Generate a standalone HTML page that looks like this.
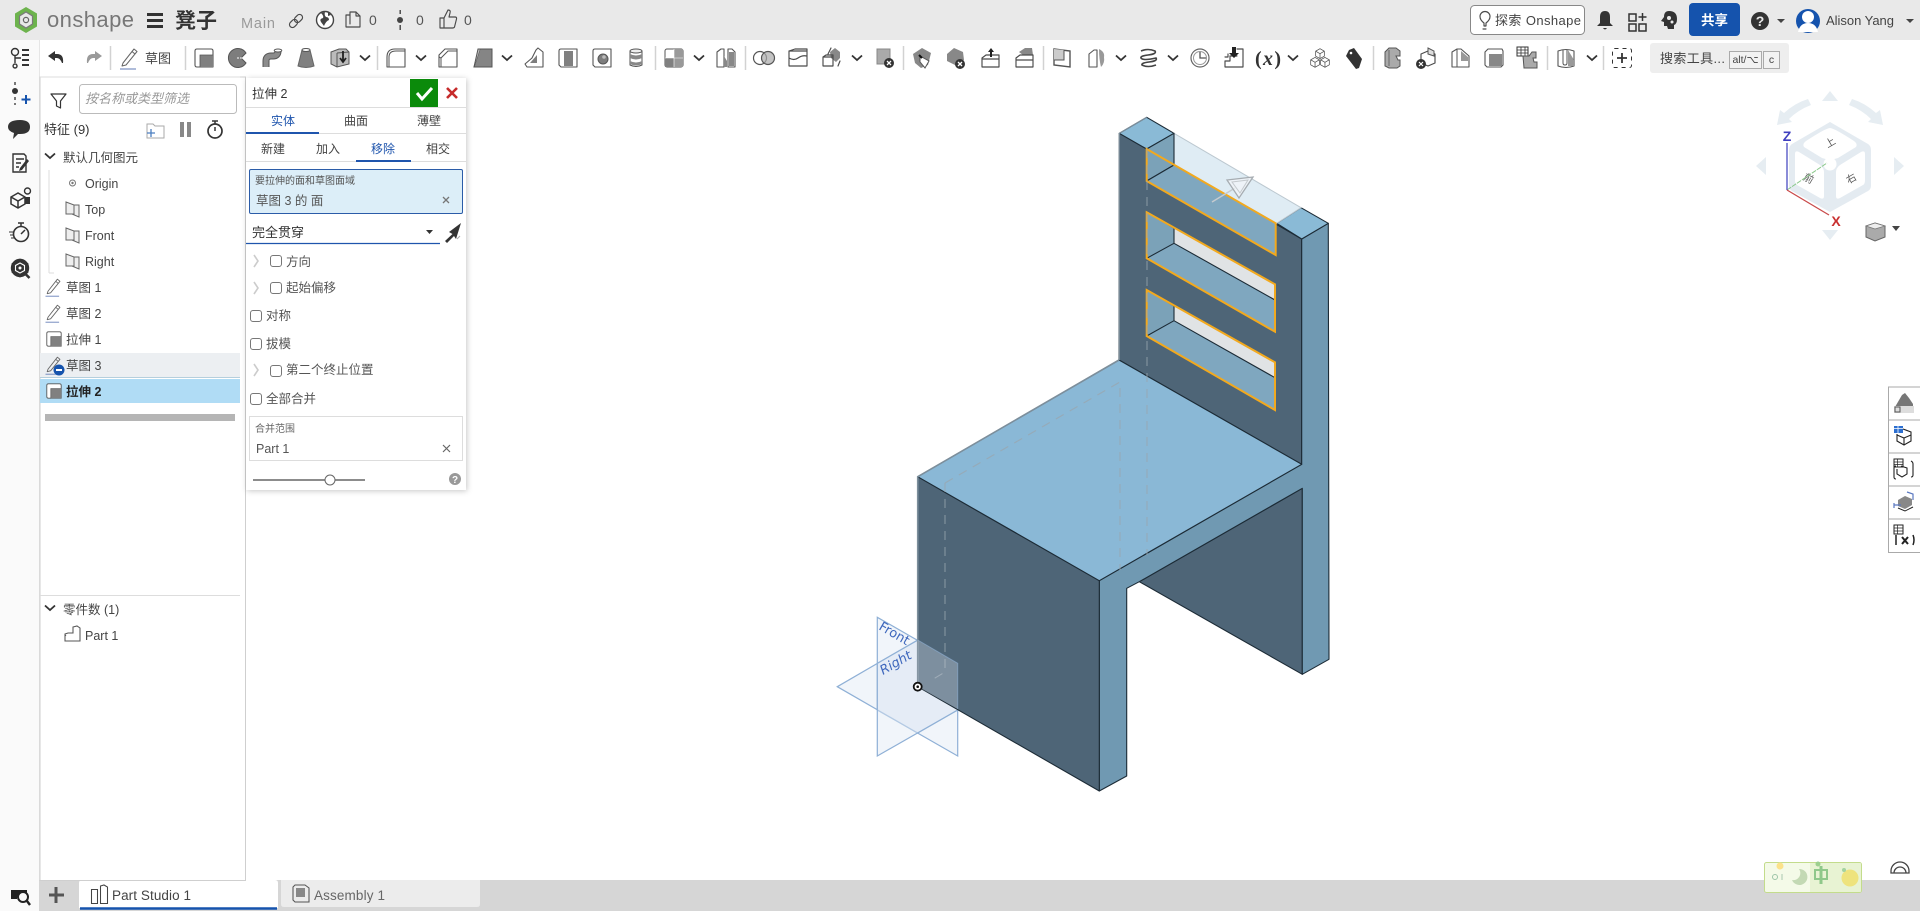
<!DOCTYPE html>
<html lang="zh"><head><meta charset="utf-8"><title>凳子</title>
<style>
html,body{margin:0;padding:0;width:1920px;height:911px;overflow:hidden;background:#fff}
svg{position:absolute;left:0;top:0;display:block}
text{font-family:"Liberation Sans","Noto Sans CJK SC",sans-serif;font-size:12.5px;fill:#444}
.c{text-anchor:middle}
.i{fill:none;stroke:#4a4a4a;stroke-width:1.15;stroke-linejoin:round;stroke-linecap:round}
.w{fill:#fff;stroke:#555;stroke-width:1.1;stroke-linejoin:round}
.ch{fill:none;stroke:#333;stroke-width:1.8}
.sep{stroke:#d2d2d2;stroke-width:1.5}
.hid{fill:none;stroke:#9aa6ae;stroke-width:1.1;stroke-dasharray:9 7;opacity:.75}
.e{stroke:#1c2b36;stroke-width:1.1;stroke-linejoin:round}
.o{fill:none;stroke:#f2a91e;stroke-width:2;stroke-linejoin:miter}
</style></head><body>
<svg width="1920" height="911" viewBox="0 0 1920 911" xmlns="http://www.w3.org/2000/svg">
<defs>
<g id="ch"><path class="ch" d="M-5 -2.500 L0 2 L5 -2.500"/></g>
<g id="ext"><path class="w" d="M-9 -7 q0 -2 2 -2 H7 q2 0 2 2 V9 H-7 q-2 0 -2 -2z"/><rect x="-4" y="-3" width="13" height="12" fill="#808080"/><path d="M-4 9 V-3 H9" fill="none" stroke="#555" stroke-width=".8"/></g>
<g id="sk"><path fill="none" stroke="#666" stroke-width="1.050" stroke-linejoin="round" d="M-7 6 L4 -8 L7 -5.500 L-4 8 L-8 9z M2 -5.500 L5 -3"/><path d="M-10 12 H6" stroke="#6d86bb" stroke-width="1.100"/></g>
<g id="plane"><path fill="#eee" stroke="#666" stroke-width="1" d="M-7 -7 L1 -4 H6 V8 L-1 5 H-7z"/><path fill="none" stroke="#666" stroke-width="1" d="M1 -4 V5 H-7"/></g>
<g id="cube"><path class="i" d="M0 -8 L7 -4 V4 L0 8 L-7 4 V-4z M-7 -4 L0 0 L7 -4 M0 0 V8"/></g>
<filter id="sh" x="-10%" y="-10%" width="120%" height="120%"><feDropShadow dx="1" dy="1" stdDeviation="3" flood-color="#000" flood-opacity=".22"/></filter>
</defs>

<!-- base regions -->
<rect width="1920" height="40" fill="#e9e9e9"/>
<rect x="0" y="40" width="40" height="871" fill="#fafafa"/>
<rect x="39" y="40" width="1" height="840" fill="#e6e6e6"/>

<!-- chair: planes behind -->
<g fill="#dfe8f3" fill-opacity=".45" stroke="#8fb0d6" stroke-width="1.2">
<path d="M837.3 686.7 L917.7 640 L998 686.7 L917.7 733z"/>
<path d="M877.3 617.3 L957.7 663.3 V756 L877.3 710z"/>
<path d="M877.3 756 V663.3 L957.7 617.3 V710z"/>
</g>
<text x="0" y="0" transform="translate(878 629) rotate(30)" style="font-family:'DejaVu Sans',sans-serif;font-size:13px;fill:#3f68bd">Front</text>
<text x="0" y="0" transform="translate(883 675) rotate(-30)" style="font-family:'DejaVu Sans',sans-serif;font-size:13px;font-style:italic;fill:#3f68bd">Right</text>

<!-- chair body -->
<g class="e">
<polygon fill="#4e6577" points="1139.3,581.7 1302.3,488.3 1302.3,674.3"/>
<polygon fill="#4e6577" points="1119.3,133.3 1146.7,149 1301.7,239 1301.7,464.3 1119,360"/>
<polygon fill="#7099b2" points="1099.3,580.7 1301.7,464.3 1301.7,239 1328.3,223.3 1329,659.3 1302.3,674.3 1302.3,488.3 1139.3,581.7 1126.7,588.3 1126.7,776 1099.3,791"/>
<polygon fill="#4e6577" points="917.7,476.7 1099.3,580.7 1099.3,791 917.7,686.7"/>
<polygon fill="#8ab8d6" points="917.7,476.7 1119,360 1301.7,464.3 1099.3,580.7"/>
<polygon fill="#8abad6" points="1119.3,133.3 1146.7,117.3 1174,133.3 1146.7,149"/>
<polygon fill="#8abad6" points="1276.7,223.3 1301,207.7 1328.3,223.3 1301.7,239"/>
</g>
<!-- light silhouettes -->
<path d="M1119 360 L917.7 476.7 V686.7" stroke="#7d8f9c" stroke-width="1.600" fill="none"/>
<path d="M1119.3 360 V133.3 L1146.7 117.3" stroke="#7d8f9c" stroke-width="1.200" fill="none"/>
<!-- top slot -->
<polygon fill="#dfecf4" stroke="#bcc8d0" stroke-width="1" points="1174,133.3 1301,207.7 1276.7,223.3 1174,165"/>
<polygon fill="#7ba2b8" class="e" points="1146.7,149 1174,133.3 1174,165 1146.7,181"/>
<polygon fill="#7fa7bf" class="e" points="1146.7,181 1174,165 1275.7,223.3 1275.7,255"/>
<polygon class="o" points="1146.7,149 1275.7,223.3 1275.7,255 1146.7,181"/>
<!-- slot 2 -->
<polygon fill="#7ba2b8" points="1146.7,212.3 1174,229 1174,243.3 1146.7,258.3"/>
<polygon fill="#e0e3e5" points="1174,227 1275,284.3 1275,300 1174,243.3"/>
<polygon fill="#7fa7bf" points="1146.7,258.3 1174,243.3 1275,300 1275,331.7"/>
<path class="e" fill="none" d="M1146.7 258.3 L1174 243.3 L1275 300 M1174 227 V243.3"/>
<polygon class="o" points="1146.7,212.3 1275,284.3 1275,331.7 1146.7,258.3"/>
<!-- slot 3 -->
<polygon fill="#7ba2b8" points="1146.7,290 1174,306.7 1174,320.7 1146.7,336"/>
<polygon fill="#e0e3e5" points="1174,305 1275,362.3 1275,377.7 1174,320.7"/>
<polygon fill="#7fa7bf" points="1146.7,336 1174,320.7 1275,377.7 1275,410"/>
<path class="e" fill="none" d="M1146.7 336 L1174 320.7 L1275 377.7 M1174 305 V320.7"/>
<polygon class="o" points="1146.7,290 1275,362.3 1275,410 1146.7,336"/>
<!-- arrow -->
<path d="M1212 202 L1235 188" stroke="#c6cbcf" stroke-width="1.400" fill="none"/>
<path d="M1227 180 L1253 177 L1239 198z" fill="#f4f7f9" fill-opacity=".7" stroke="#a6acb1" stroke-width="1.300"/>
<path d="M1232 182 L1248 180 L1240 193z" fill="none" stroke="#c4c9cd" stroke-width="1"/>
<!-- hidden -->
<path class="hid" d="M945 483 V672 L930 681"/>
<path class="hid" d="M945 483 L1120 382 V570"/>
<path class="hid" d="M1147 149 V555"/>
<!-- plane overlay on chair corner -->
<polygon points="917.7,640 957.7,663.3 957.7,709 917.7,686.7" fill="#c5cfdb" fill-opacity=".4"/>
<path d="M917.7 640 L957.7 663.3 V709" fill="none" stroke="#8fb0d6" stroke-width="1" opacity=".6"/>
<circle cx="917.7" cy="686.7" r="4" fill="#fff" stroke="#111" stroke-width="1.800"/><circle cx="917.7" cy="686.7" r="1.300" fill="#111"/>

<!-- gizmo -->
<g fill="#e6edf2">
<path d="M1830 91 L1838 101 H1822z M1756 166 L1766 157 V175z M1904 166 L1894 157 V175z M1830 240 L1822 230 H1838z"/>
<path d="M1777 125 L1780 110 L1784 113 Q1795 103 1808 99 L1811 105 Q1798 110 1789 119 L1792 122z"/>
<path d="M1883 125 L1880 110 L1876 113 Q1865 103 1852 99 L1849 105 Q1862 110 1871 119 L1868 122z"/>
<path d="M1830 122 L1868 144 Q1871 146 1871 150 V186 Q1871 189 1868 191 L1830 212 L1792 191 Q1789 189 1789 186 V150 Q1789 146 1792 144z" fill="#e4ebf1"/>
</g>
<path d="M1830 128 Q1834 128 1854 141 Q1858 144 1856 147 L1838 158 Q1830 161 1822 158 L1804 147 Q1802 144 1806 141 Q1826 128 1830 128z" fill="#fff"/>
<path d="M1795 154 Q1795 150 1799 152 L1820 165 Q1824 168 1824 172 V196 Q1824 200 1820 198 L1797 185 Q1795 184 1795 180z" fill="#fff"/>
<path d="M1865 154 Q1865 150 1861 152 L1840 165 Q1836 168 1836 172 V196 Q1836 200 1840 198 L1863 185 Q1865 184 1865 180z" fill="#fff"/>
<circle cx="1830" cy="164" r="6.500" fill="#fff"/>
<text class="c" x="1830" y="146" transform="rotate(-30 1830 142)" style="font-size:10px;fill:#555">上</text>
<text class="c" x="1809" y="182" transform="rotate(30 1809 178)" style="font-size:10px;fill:#555">前</text>
<text class="c" x="1851" y="182" transform="rotate(-30 1851 178)" style="font-size:10px;fill:#555">右</text>
<path d="M1787 190 L1827 163" stroke="#8bc98b" stroke-width="1" fill="none" stroke-dasharray="5 1"/>
<path d="M1787 143 V190" stroke="#4a4fc4" stroke-width="1.300" fill="none"/>
<path d="M1787 190 L1829 215" stroke="#c94a4a" stroke-width="1.300" fill="none"/>
<text class="c" x="1787" y="141" style="font-size:14px;font-weight:bold;fill:#3f3fbf">Z</text>
<text class="c" x="1836" y="226" style="font-size:14px;font-weight:bold;fill:#c93030">X</text>
<path d="M1875 223 L1885 226 V237 L1875 241 L1866 237 V226z" fill="#aaa" stroke="#666"/>
<path d="M1866 226 L1875 229 L1885 226 L1875 223z" fill="#eee" stroke="#777" stroke-width=".7"/>
<path d="M1892 226 H1900 L1896 231z" fill="#444"/>

<!-- TOP BAR -->
<path d="M26 7 L37 13.500 V26.500 L26 33 L15 26.500 V13.500z" fill="#6db34d"/>
<path d="M26 12 L32.500 16 V24 L26 28 L19.500 24 V16z" fill="#e9e9e9" stroke="#7b7b7b" stroke-width="1.200"/>
<circle cx="26" cy="20" r="2.600" fill="none" stroke="#666" stroke-width="1.200"/>
<text x="47" y="27" style="font-size:22px;fill:#777" textLength="87">onshape</text>
<path d="M147 14.500 H163 M147 20.500 H163 M147 26.500 H163" stroke="#333" stroke-width="3"/>
<text x="175" y="28" style="font-size:21px;font-weight:bold;fill:#333">凳子</text>
<text x="241" y="28" style="font-size:14.500px;fill:#9a9a9a" textLength="34">Main</text>
<g class="i" transform="translate(296,21) rotate(-45)"><rect x="-8" y="-3" width="9" height="6" rx="3"/><rect x="-1" y="-3" width="9" height="6" rx="3"/></g>
<circle cx="325" cy="20" r="8.500" fill="#fff" stroke="#444" stroke-width="1.400"/><path d="M321 13 q3 3 2 5 q-4 1 -2 4 l3 4 q2 -5 5 -6 q0 -3 -3 -3 q-2 -2 -1 -5z M328 12 l3 3 l-3 1z" fill="#444"/>
<path class="i" d="M346 15 h4 v-3 h6 l4 4 v11 h-14z M350 15 v9 M356 12 v4 h4"/><text x="369" y="25" style="font-size:14px;fill:#555">0</text>
<g fill="#444"><circle cx="400" cy="20" r="3"/><path d="M399.500 10 h1.400 v4 h-1.400z M399.500 25 h1.400 v5 h-1.400z"/></g><text x="416" y="25" style="font-size:14px;fill:#555">0</text>
<path class="i" d="M440 18 h4 v10 h-4z M444 18 l4 -8 q3 0 2 3 l-1 4 h6 q2 0 1.500 2 l-2 8 q-.5 1 -2 1 h-9.500"/><text x="464" y="25" style="font-size:14px;fill:#555">0</text>

<rect x="1470.500" y="5.500" width="114" height="29" rx="4" fill="#fff" stroke="#888"/>
<path class="i" d="M1484 26 v-3 q-4 -3 -4 -6.500 a5 5 0 0 1 10 0 q0 3.500 -4 6.500 v3 z M1483 29 h3"/>
<text x="1495" y="25" style="font-size:13px" textLength="86">探索 Onshape</text>
<path d="M1605 11 q5 0 5 6 v6 l3 3 h-16 l3 -3 v-6 q0 -6 5 -6z M1603 28 h4 q-2 3 -4 0z" fill="#333"/>
<path fill="none" stroke-width="1.500" stroke="#333" d="M1629 14 h7 v7 h-7z M1629 24 h7 v7 h-7z M1639 24 h7 v7 h-7z M1642.500 13 v8 M1638.500 17 h8"/>
<path d="M1669 11 q8 0 8 8 q0 5 -3 6 v4 h-6 l-1 -3 h-3 v-4 l-3 -1 l3 -4 q0 -6 5 -6z" fill="#333"/><circle cx="1669" cy="18" r="2" fill="#e9e9e9"/><circle cx="1672" cy="22" r="1.500" fill="#e9e9e9"/>
<rect x="1689" y="3" width="51" height="33" rx="4" fill="#1553ad"/>
<text class="c" x="1714.500" y="25" style="font-size:13.500px;font-weight:bold;fill:#fff">共享</text>
<circle cx="1760" cy="21" r="9" fill="#333"/><text class="c" x="1760" y="26" style="font-size:14px;font-weight:bold;fill:#e9e9e9">?</text>
<path d="M1777 19 h8 l-4 4z" fill="#444"/>
<circle cx="1808" cy="21" r="12" fill="#1553ad"/><circle cx="1808" cy="17" r="6" fill="#fff"/><path d="M1798 32 q2 -9 10 -9 q8 0 10 9 z" fill="#fff"/>
<text x="1826" y="25" style="font-size:13px" textLength="68">Alison Yang</text>
<path d="M1906 19 h8 l-4 4z" fill="#444"/>

<!-- TOOLBAR -->
<path d="M63 63 q1 -9 -6 -9 h-2 v-3 l-7 5 l7 5 v-3 h2 q3 0 5 5z" fill="#333"/>
<path d="M87 63 q-1 -9 6 -9 h2 v-3 l7 5 l-7 5 v-3 h-2 q-3 0 -5 5z" fill="#9a9a9a"/>
<g class="sep"><path d="M110.500 46 V70 M185.500 46 V70 M377.500 46 V70 M655.500 46 V70 M745.500 46 V70 M903.500 46 V70 M1043.500 46 V70 M1373.500 46 V70 M1547.500 46 V70 M1603.500 46 V70"/></g>
<use href="#sk" x="130" y="57"/>
<text x="145" y="63" style="font-size:13px" textLength="26">草图</text>
<use href="#ext" x="204" y="58"/>
<g transform="translate(238,58)"><path d="M8 -5 A9.500 9.500 0 1 0 8 5 L3 0z" fill="#7d7d7d" stroke="#555"/><path d="M-1 0 h10" stroke="#fff" stroke-width="1" stroke-dasharray="2 1"/></g>
<g transform="translate(273,58)"><path d="M-7 9 V3 q0 -5 5 -5 h2 q5 0 5 -5" fill="none" stroke="#555" stroke-width="7"/><path d="M-7 9 V3 q0 -5 5 -5 h2 q5 0 5 -5" fill="none" stroke="#8c8c8c" stroke-width="5"/><ellipse cx="5" cy="-7.500" rx="3.800" ry="1.500" fill="#fff" stroke="#555"/></g>
<g transform="translate(306,58)"><path d="M-4 -8 L-8 8 q8 3 16 0 L4 -8z" fill="#808080" stroke="#666"/><ellipse cx="0" cy="-8" rx="4" ry="1.500" fill="#fff" stroke="#555"/></g>
<g transform="translate(340,58)"><path d="M-9 -6 L-1 -9 L6 -9 L9 -6 V6 L-3 9 L-9 6z" fill="#bbb" stroke="#555"/><path d="M-3 -5 L9 -6 M-3 -5 V9" stroke="#555" fill="none"/><path d="M3 -7 V3 M0 0 L3 4 L6 0" stroke="#222" stroke-width="1.800" fill="none"/></g>
<use href="#ch" x="365" y="58"/>
<g transform="translate(396,58)"><path class="w" d="M-9 9 V-1 q0 -8 8 -8 H9 V9z"/><path fill="none" stroke="#555" d="M-7 9 V-1 q0 -6 7 -6 H9"/></g><use href="#ch" x="421" y="58"/>
<g transform="translate(448,58)"><path class="w" d="M-9 -3 L-3 -9 H9 V9 H-9z"/><path fill="none" stroke="#555" d="M-9 -1 L-7 -0 V9 M-7 0 L0 -7 H9"/></g>
<g transform="translate(483,58)"><path d="M-3 -9 H9 V9 H-9z" fill="#858585" stroke="#555"/><path d="M-3 -9 L-5 -9 L-9 9" fill="#bbb" stroke="#555"/></g><use href="#ch" x="507" y="58"/>
<g transform="translate(534,58)"><path class="w" d="M-9 6 L-2 0 L2 -8 L4 -10 L9 -6 V9 H-7z"/><path d="M-4 5 L3 -3 V5z" fill="#7d7d7d"/></g>
<g transform="translate(568,58)"><path class="w" d="M-9 -7 q0 -2 2 -2 H9 V9 H-7 l-2 -2z"/><rect x="-4" y="-7" width="9" height="15" fill="#808080"/></g>
<g transform="translate(602,58)"><path class="w" d="M-9 -7 q0 -2 2 -2 H9 V9 H-7 l-2 -2z"/><circle cx="1" cy="1" r="5" fill="#7d7d7d" stroke="#555"/><circle cx="2" cy="-1" r="1.800" fill="#bbb"/></g>
<g transform="translate(636,58)"><path d="M-6 -7 V7 q6 3 12 0 V-7z" fill="#fff" stroke="#555"/><path d="M-6 -4 q6 3 12 0 V0 q-6 3 -12 0z M-6 3 q6 3 12 0 v3 q-6 3 -12 0z" fill="#888"/><ellipse cx="0" cy="-7" rx="6" ry="2" fill="#eee" stroke="#555"/></g>
<g transform="translate(674,58)"><rect x="-9" y="-9" width="18" height="18" rx="2" fill="#fff" stroke="#555"/><rect x="0" y="-9" width="9" height="9" fill="#999"/><rect x="-9" y="0" width="9" height="9" fill="#808080"/><rect x="0" y="0" width="9" height="9" fill="#999"/><path d="M-9 0 H9 M0 -9 V9" stroke="#fff" stroke-width=".6"/></g><use href="#ch" x="699" y="58"/>
<g transform="translate(726,58)"><path class="w" d="M-9 -6 L-5 -9 h3 V9 h-7z"/><path class="w" d="M2 -9 h4 l3 3 V9 H2z"/><path d="M-2 -2 l3 5 v6 h-3z" fill="#888"/><path d="M3 -6 h5 V8 H3z" fill="#888"/></g>
<circle cx="760" cy="58" r="6.500" fill="#fff" stroke="#555" stroke-width="1.200"/><circle cx="768" cy="58" r="6.500" fill="#aaa" fill-opacity=".7" stroke="#555" stroke-width="1.200"/>
<g transform="translate(798,58)"><path class="i" d="M-9 -7 L-3 -9 H9 V8 H-9z M-9 -7 H9 M-9 0 q5 3 9 0 q4 -3 9 -2"/></g>
<g transform="translate(832,58)"><path d="M3 -10 l5 4 v6 l-4 4 l-5 -4 l-1 -6z" fill="#888"/><path class="i" d="M-9 -1 l3 -2 h7 v11 h-10z M-9 -1 h10 M-4 -4 l3 -6 M8 3 l-2 5"/></g><use href="#ch" x="857" y="58"/>
<g transform="translate(884,58)"><rect x="-7" y="-9" width="13" height="15" fill="#aaa" stroke="#888"/><circle cx="5" cy="5" r="5" fill="#333"/><path d="M3 3 l4 4 m0 -4 l-4 4" stroke="#fff" stroke-width="1.300"/></g>
<g transform="translate(922,58)"><path d="M-9 -4 l9 -6 l9 5 l-3 12 l-7 3 l-6 -5z" fill="#888"/><path d="M-2 -2 l9 5 l-4 7 l-5 -6z" fill="#fff" stroke="#555"/><path d="M-3 -3 l3 3" stroke="#111" stroke-width="2"/></g>
<g transform="translate(956,58)"><path d="M-9 -4 l7 -6 l9 4 l1 8 l-9 5 l-8 -4z" fill="#888"/><circle cx="4" cy="6" r="5" fill="#333"/><path d="M2 4 l4 4 m0 -4 l-4 4" stroke="#fff" stroke-width="1.300"/></g>
<g transform="translate(990,58)"><path class="i" d="M-8 0 l4 -3 h13 v12 h-17z M-8 1 h17"/><path d="M1 -10 l-3 4 h2 v5 h2 v-5 h2z" fill="#222"/></g>
<g transform="translate(1024,58)"><path d="M-5 -6 l6 -4 h7 l1 7 h-10z" fill="#888"/><path class="i" d="M-8 0 l4 -3 h13 v12 h-17z M-8 2 h17"/></g>
<g transform="translate(1062,58)"><path d="M-8 -9 L8 -7 V9 L-8 7z" fill="#fff" stroke="#555" stroke-width="1.400"/><path d="M-8 -9 L2 -8 V2 H-8z" fill="#ccc"/><path d="M2 -8 V2 H-8" fill="none" stroke="#555"/></g>
<g transform="translate(1097,58)"><path class="w" d="M-8 -4 l5 -4 h3 V9 h-8z"/><path d="M2 -9 q6 3 5 8 q1 6 -3 10 q-2 -8 -2 -18z" fill="#999"/></g><use href="#ch" x="1121" y="58"/>
<path fill="none" stroke="#444" stroke-width="1.600" d="M1141 51 q7 -3 14 0 q2 3 -7 4 q-8 1 -7 3 q2 3 15 0 q2 3 -7 4 q-8 1 -7 3 q6 3 14 0"/><use href="#ch" x="1173" y="58"/>
<circle cx="1200" cy="58" r="9" fill="#fff" stroke="#666" stroke-width="1.200"/><circle cx="1200" cy="58" r="6.500" fill="none" stroke="#999"/><path d="M1200 52 V58 H1206" stroke="#555" fill="none" stroke-width="1.300"/>
<g transform="translate(1234,58)"><path class="i" d="M-9 -1 h3 v-3 M3 -9 h6 v18 h-18 v-6 h5 v-5 h7"/><path d="M-2 -11 v6 h-3 l5 5 l5 -5 h-3 v-6z" fill="#222"/></g>
<text x="1255" y="65" style="font-family:'Liberation Serif',serif;font-size:20px;font-weight:bold;fill:#333" textLength="26">(<tspan font-style="italic">x</tspan>)</text>
<use href="#ch" x="1293" y="58"/>
<g transform="translate(1320,58) scale(.62)"><use href="#cube" y="-7"/><use href="#cube" x="-8" y="7"/><use href="#cube" x="8" y="7"/></g>
<path d="M1349 50 l5 -2 l8 11 l-3 9 l-3 1 l-10 -13z" fill="#333"/><circle cx="1351" cy="53" r="1.300" fill="#fff"/>
<g transform="translate(1392,58)"><path d="M-7 -6 l4 -4 h7 l4 3 v5 h-4 l2 4 h2 v6 l-3 2 h-8 l-4 -2z" fill="#aaa" stroke="#555"/><path d="M-3 -8 V8" stroke="#666" fill="none"/></g>
<g transform="translate(1426,58)"><path class="i" d="M-5 -4 l7 -3 l7 3 v9 l-7 3 l-7 -3z"/><path d="M2 -10 l6 3 v5 l-6 -2z" fill="#ddd" stroke="#555"/><circle cx="-5" cy="6" r="5" fill="#333"/><path d="M-7 4 l4 4 m0 -4 l-4 4" stroke="#fff" stroke-width="1.200"/></g>
<g transform="translate(1460,58)"><path class="w" d="M-8 -6 l5 -3 h4 l8 7 v11 h-17z"/><path d="M1 -7 l7 6 v4 h-7z" fill="#999"/><path d="M-3 -9 V9" stroke="#555"/></g>
<g transform="translate(1494,58)"><path class="w" d="M-9 -6 l3 -3 h14 l1 2 v14 l-2 2 h-14 l-2 -2z"/><path d="M-5 -4 h13 v12 h-13z" fill="#888"/></g>
<g transform="translate(1528,58)"><rect x="-11" y="-11" width="11" height="9" fill="#fff" stroke="#333"/><path d="M-11 -8 h11 M-11 -5 h11 M-7 -11 v9 M-3 -11 v9" stroke="#333" stroke-width=".8"/><path d="M-5 -2 h6 l3 -4 h4 v6 h-3 l1 4 h3 v6 h-13z" fill="#aaa" stroke="#555"/></g>
<g transform="translate(1566,58)"><path class="w" d="M-8 -7 q8 -3 16 0 v15 q-8 3 -16 0z"/><path d="M-3 -8 v13 q0 2 2 2 q2 0 2 -2 v-13" fill="none" stroke="#555"/><path d="M2 -8 l6 10 v6 h-6z" fill="#999"/></g><use href="#ch" x="1592" y="58"/>
<rect x="1612.500" y="48.500" width="19" height="19" rx="2" fill="none" stroke="#333" stroke-dasharray="4 4"/><path d="M1622 53 v10 M1617 58 h10" stroke="#333" stroke-width="1.800"/>
<rect x="1650" y="43" width="139" height="30" rx="3" fill="#eeeeee"/>
<text x="1660" y="63" style="font-size:13px" textLength="65">搜索工具...</text>
<rect x="1729.500" y="51.500" width="32" height="17" fill="#f2f2f2" stroke="#aaa"/><text class="c" x="1745.500" y="63" style="font-size:10.500px">alt/⌥</text>
<rect x="1763.500" y="51.500" width="16" height="17" fill="#f2f2f2" stroke="#aaa"/><text class="c" x="1771.500" y="63" style="font-size:10.500px">c</text>

<!-- LEFT RAIL -->
<g transform="translate(20,58)"><circle cx="-5" cy="-6" r="3.500" fill="none" stroke="#333" stroke-width="1.400"/><path d="M-5 -2 V5 M-5 0 H1 M-5 6 m0 0 a2 2 0 1 0 .1 0" fill="none" stroke="#333" stroke-width="1.400"/><path d="M2 -8 H9 M2 -3 H9 M2 2 H9 M2 7 H9" stroke="#333" stroke-width="2"/></g>
<g transform="translate(20,94)"><path d="M-5 -12 v3 M-5 3 v3 M-5 9 v2" stroke="#333" stroke-width="1.300"/><circle cx="-5" cy="-3" r="3" fill="#333"/><path d="M6 1 v9 M1.500 5.500 h9" stroke="#1553ad" stroke-width="2"/></g>
<path d="M20 120 q10 0 10 7 q0 7 -10 7 h-2 l-5 5 l1 -6 q-6 -2 -6 -6 q0 -7 12 -7z" fill="#333"/>
<g transform="translate(20,163)"><path fill="none" stroke="#333" stroke-width="1.400" d="M-7 -9 h11 l2 2 v16 h-13z M-4 -4 h8 M-4 0 h5 M-4 4 h3"/><path d="M0 5 l7 -9 l2 2 l-7 9 l-3 1z" fill="#333"/></g>
<g transform="translate(20,198)"><path fill="none" stroke="#333" stroke-width="1.500" d="M-2 -5 l-7 4 v7 l7 4 l7 -4 v-7z M-9 -1 l7 4 l7 -4 M-2 3 v7"/><rect x="5" y="-1" width="5" height="7" fill="#333"/><circle cx="7.500" cy="-7" r="3" fill="none" stroke="#333" stroke-width="1.400"/></g>
<g transform="translate(20,233)"><circle cx="1" cy="1" r="7.500" fill="none" stroke="#333" stroke-width="1.600"/><path d="M-2 -10 h6 M1 -10 v3 M1 1 l4 -4" stroke="#333" stroke-width="1.500"/><path d="M-11 -1 h5 M-10 2 h4 M-9 5 h4" stroke="#333" stroke-width="1.100"/></g>
<g transform="translate(20,268)"><path d="M0 -9.500 L8.500 -4.500 V4.500 L0 9.500 L-8.500 4.500 V-4.500z" fill="#333"/><circle cx="0" cy="0" r="8" fill="none" stroke="#333" stroke-width="2.400"/><path d="M5.500 6 l4 4" stroke="#333" stroke-width="2.600"/><path d="M0 -5 l4.500 2.500 v5 L0 5 l-4.500 -2.500 v-5z" fill="none" stroke="#fff" stroke-width="1.100"/><circle cx="0" cy="0" r="1.500" fill="#fff"/></g>
<g transform="translate(20,897)"><path d="M-9 -7 h16 v3 h-7 a6 6 0 0 0 -3 6 h-6z" fill="#222"/><circle cx="3" cy="0" r="5" fill="none" stroke="#222" stroke-width="2"/><path d="M7 4 l3 4" stroke="#222" stroke-width="2.400"/></g>

<!-- BOTTOM BAR -->
<rect x="39" y="880" width="1881" height="31" fill="#d6d6d6"/>
<path d="M56 887 V903 M49 895 H64" stroke="#555" stroke-width="3"/>
<path d="M79 908 V883 q0 -3 3 -3 H275 q3 0 3 3 V908z" fill="#fff"/>
<path d="M80 908.500 H277" stroke="#1553ad" stroke-width="2.400"/>
<path fill="none" stroke="#444" stroke-width="1.050" d="M91.500 889.500 h6 v14 h-6z M100.500 886 l3.500 -1 l3.500 2 v16.500 h-7z"/>
<text x="112" y="900" style="font-size:13.500px" textLength="79">Part Studio 1</text>
<path d="M281 880 H480 V904 q0 3 -3 3 H284 q-3 0 -3 -3z" fill="#ececec"/>
<g transform="translate(301,894)"><path fill="none" stroke="#555" stroke-width="1.050" d="M-8 -7 l2 -2 h10 l4 3 v14 h-14 l-2 -2z"/><rect x="-5" y="-6" width="9" height="9" fill="#888"/></g>
<text x="314" y="900" style="font-size:13.500px;fill:#666" textLength="71">Assembly 1</text>

<!-- FEATURE PANEL -->
<path d="M40 77 H245.500 V880.500 H40z" fill="#fff" stroke="#cfcfcf"/>
<rect x="40" y="76.500" width="200" height="1" fill="#ddd"/>
<path fill="none" stroke="#333" stroke-width="1.200" stroke-linejoin="round" d="M51 94 H66 L60.500 101 V108 L56.500 106 V101z"/>
<rect x="79.500" y="84.500" width="157" height="29" rx="3" fill="#fff" stroke="#bbb"/>
<text x="85" y="103" style="font-size:13px;font-style:italic;fill:#999">按名称或类型筛选</text>
<text x="44" y="134" style="font-size:13px;fill:#333">特征 (9)</text>
<path d="M147 124 h6 l2 2 h9 v12 h-17z" fill="none" stroke="#aaa"/><path d="M151 129 v8 M147 133 h8" stroke="#4a7ec0" stroke-width="1.300"/>
<path d="M180 122 h4 v15 h-4z M187 122 h4 v15 h-4z" fill="#888"/>
<circle cx="215" cy="131" r="7" fill="none" stroke="#333" stroke-width="1.700"/><path d="M212 121 h6 M215 121 v3 M215 127 v4" stroke="#333" stroke-width="1.500"/>
<use href="#ch" x="50" y="156"/>
<text x="63" y="162" style="font-size:12.500px">默认几何图元</text>
<path d="M49 170 V273" stroke="#ddd"/><path d="M49 273 H54" stroke="#ddd"/>
<circle cx="72.500" cy="183" r="3" fill="none" stroke="#777"/><circle cx="72.500" cy="183" r="1.200" fill="#777"/>
<text x="85" y="188">Origin</text>
<use href="#plane" x="73" y="209"/><text x="85" y="214">Top</text>
<use href="#plane" x="73" y="235"/><text x="85" y="240">Front</text>
<use href="#plane" x="73" y="261"/><text x="85" y="266">Right</text>
<use href="#sk" transform="translate(54,286) scale(.85)"/><text x="66" y="292">草图 1</text>
<use href="#sk" transform="translate(54,312) scale(.85)"/><text x="66" y="318">草图 2</text>
<use href="#ext" transform="translate(54,339) scale(.8)"/><text x="66" y="344">拉伸 1</text>
<rect x="40" y="353" width="200" height="24" fill="#eceff2"/><path d="M40 377.500 H240" stroke="#b5cfdd"/>
<use href="#sk" transform="translate(54,364) scale(.85)"/><circle cx="59" cy="370" r="5.500" fill="#1553ad"/><path d="M56 370 h6" stroke="#fff" stroke-width="2"/>
<text x="66" y="370">草图 3</text>
<rect x="40" y="379" width="200" height="24" fill="#b0dcf5"/>
<use href="#ext" transform="translate(54,391) scale(.8)"/><text x="66" y="396" style="font-weight:bold;fill:#222">拉伸 2</text>
<rect x="45" y="414" width="190" height="7" fill="#b5b5b5"/>
<path d="M40 595.500 H240" stroke="#ddd"/>
<use href="#ch" x="50" y="608"/>
<text x="63" y="614">零件数 (1)</text>
<path fill="none" stroke="#555" stroke-width="1.050" d="M65 641 v-7 l3 -1 h5 v-6 l4 -1 l3 2 v13z M65 636 l1 -1"/>
<text x="85" y="640">Part 1</text>

<!-- DIALOG -->
<rect x="246" y="78" width="220" height="412" fill="#fff" filter="url(#sh)"/>
<rect x="246" y="78" width="220" height="412" fill="#fff"/>
<text x="252" y="98" style="font-size:12.500px;fill:#333">拉伸 2</text>
<rect x="410" y="79" width="28" height="28" fill="#0b8a0b"/>
<path d="M417 93 l5 6 l10 -11" fill="none" stroke="#fff" stroke-width="3"/>
<path d="M447 88 l10 10 M457 88 l-10 10" stroke="#c62b2b" stroke-width="2.600"/>
<path d="M246 107.500 H466 M246 133.500 H466 M246 161.500 H466" stroke="#ddd"/>
<text class="c" x="283" y="125" style="font-size:12px;fill:#1f55ad">实体</text>
<text class="c" x="356" y="125" style="font-size:12px">曲面</text>
<text class="c" x="429" y="125" style="font-size:12px">薄壁</text>
<rect x="246" y="132" width="73" height="2" fill="#1f55ad"/>
<text class="c" x="273" y="153" style="font-size:12px">新建</text>
<text class="c" x="328" y="153" style="font-size:12px">加入</text>
<text class="c" x="383" y="153" style="font-size:12px;fill:#1f55ad">移除</text>
<text class="c" x="438" y="153" style="font-size:12px">相交</text>
<rect x="356" y="160" width="55" height="2" fill="#1f55ad"/>
<rect x="249.500" y="169.500" width="213" height="44" rx="1.500" fill="#dceef8" stroke="#2b5ca8"/>
<text x="255" y="184" style="font-size:10px;fill:#555">要拉伸的面和草图面域</text>
<text x="256" y="205" style="font-size:12.500px;fill:#555">草图 3 的 面</text>
<path d="M443 197 l6 6 m0 -6 l-6 6" stroke="#777" stroke-width="1.300"/>
<text x="252" y="237" style="font-size:13px;fill:#333">完全贯穿</text>
<path d="M426 230 h7 l-3.500 4z" fill="#333"/>
<path d="M246 243.500 H440" stroke="#1f55ad" stroke-width="1.300"/>
<path d="M461 223 L449 232 L452.500 234 L445 241 L447 243 L454 236 L456 239z" fill="#333"/><path d="M457 239 l3 -3" stroke="#aaa"/>
<path d="M254 255 l4 6 l-4 6 M254 282 l4 6 l-4 6 M254 364 l4 6 l-4 6" fill="none" stroke="#ccc" stroke-width="1.600"/>
<g fill="#fff" stroke="#777"><rect x="270.500" y="255.500" width="11" height="11" rx="2.500"/><rect x="270.500" y="282.500" width="11" height="11" rx="2.500"/><rect x="250.500" y="310.500" width="11" height="11" rx="2.500"/><rect x="250.500" y="338.500" width="11" height="11" rx="2.500"/><rect x="270.500" y="365.500" width="11" height="11" rx="2.500"/><rect x="250.500" y="393.500" width="11" height="11" rx="2.500"/></g>
<text x="286" y="266" style="fill:#555">方向</text>
<text x="286" y="292" style="fill:#555">起始偏移</text>
<text x="266" y="320" style="fill:#555">对称</text>
<text x="266" y="348" style="fill:#555">拔模</text>
<text x="286" y="374" style="fill:#555">第二个终止位置</text>
<text x="266" y="403" style="fill:#555">全部合并</text>
<rect x="249.500" y="416.500" width="213" height="44" fill="#fff" stroke="#ddd"/>
<text x="255" y="432" style="font-size:10px;fill:#666">合并范围</text>
<text x="256" y="453" style="font-size:12.500px;fill:#555">Part 1</text>
<path d="M443 445 l7 7 m0 -7 l-7 7" stroke="#666" stroke-width="1.200"/>
<path d="M253 480 H365" stroke="#666" stroke-width="1.400"/>
<circle cx="330" cy="480" r="5" fill="#fff" stroke="#666"/>
<circle cx="455" cy="479" r="6" fill="#999"/><text class="c" x="455" y="483" style="font-size:10px;font-weight:bold;fill:#fff">?</text>

<!-- RIGHT STACK -->
<path d="M1920 387 H1888.500 V552.500 H1920" fill="#fff" stroke="#aaa"/>
<path d="M1888 420 H1920 M1888 453 H1920 M1888 486 H1920 M1888 519 H1920" stroke="#aaa"/>
<g transform="translate(1904,403)"><path d="M-9 4 l7 -12 l3 -2 l4 5 l4 6 v3z" fill="#777"/><rect x="-10" y="3" width="20" height="7" fill="#ddd"/><rect x="-9" y="4" width="5" height="5" fill="none" stroke="#555"/></g>
<g transform="translate(1904,436)"><rect x="-10" y="-10" width="9" height="7" fill="#2c6fd0"/><path d="M-10 -7.500 h9 M-6 -10 v7" stroke="#fff" stroke-width=".8"/><path fill="none" stroke="#222" stroke-width="1.100" d="M-1 -7 l8 3 v9 l-7 4 l-7 -4 v-7 M-7 -1 l7 3 l7 -3 M0 2 v7"/></g>
<g transform="translate(1904,469)"><rect x="-10" y="-10" width="9" height="8" fill="#fff" stroke="#222"/><path d="M-10 -7 h9 M-10 -4.500 h9 M-6.500 -10 v8" stroke="#222" stroke-width=".7"/><path fill="none" stroke="#222" stroke-width="1.100" d="M-3 -3 l6 2 v6 l-5 3 l-5 -3 v-5 M-8 -3 q-2 0 -2 2 v9 q0 2 2 2 M7 -8 q2 1 2 3 v11 q0 2 -2 2"/></g>
<g transform="translate(1904,502)"><path d="M-6 -2 l7 -4 l7 3 v6 l-7 4 l-7 -3z" fill="#888"/><path d="M-10 3 h7 M3 -10 l6 2 v6 M-10 1 v5" stroke="#5a78c0" fill="none" stroke-width="1.200"/><path d="M-6 6 l7 3 l8 -4" stroke="#222" fill="none"/></g>
<g transform="translate(1904,535)"><rect x="-10" y="-10" width="9" height="9" fill="#fff" stroke="#222"/><path d="M-10 -7 h9 M-10 -4 h9 M-6.500 -10 v9" stroke="#222" stroke-width=".7"/><path d="M-8 0 v10 M9 0 q2 5 0 10" stroke="#222" stroke-width="1.500" fill="none"/><path d="M-2 2 l6 7 M4 2 l-6 7" stroke="#222" stroke-width="2"/></g>

<!-- green widget -->
<rect x="1764.500" y="862.500" width="97" height="30" rx="2" fill="#f4fae8" stroke="#c3dc8c"/>
<rect x="1810" y="863" width="51" height="29" fill="#e3f0cb" opacity=".7"/>
<circle cx="1780" cy="866" r="3.500" fill="#fbe28a"/><circle cx="1775" cy="877" r="2.500" fill="none" stroke="#9cc5a8"/><path d="M1782 874 v6" stroke="#aac8b0"/>
<path d="M1799 869 a8 8 0 1 1 -7 11 a7 7 0 0 0 7 -11z" fill="#c3d9b4"/>
<rect x="1815" y="870" width="12" height="9" fill="none" stroke="#8fc88a" stroke-width="2"/><path d="M1821 866 v18" stroke="#8fc88a" stroke-width="3"/><circle cx="1818" cy="864" r="2.500" fill="#9ccf8e"/>
<circle cx="1850" cy="878" r="8.500" fill="#eee37d"/><circle cx="1844" cy="870" r="2" fill="#a3d3a0"/>
<!-- gauge -->
<path d="M1891 873 v-2 a9 9 0 0 1 18 0 v2z M1894 873 a6 6 0 0 1 12 0" fill="none" stroke="#444" stroke-width="1.300"/><path d="M1891 873 h18" stroke="#444"/>
</svg>
</body></html>
